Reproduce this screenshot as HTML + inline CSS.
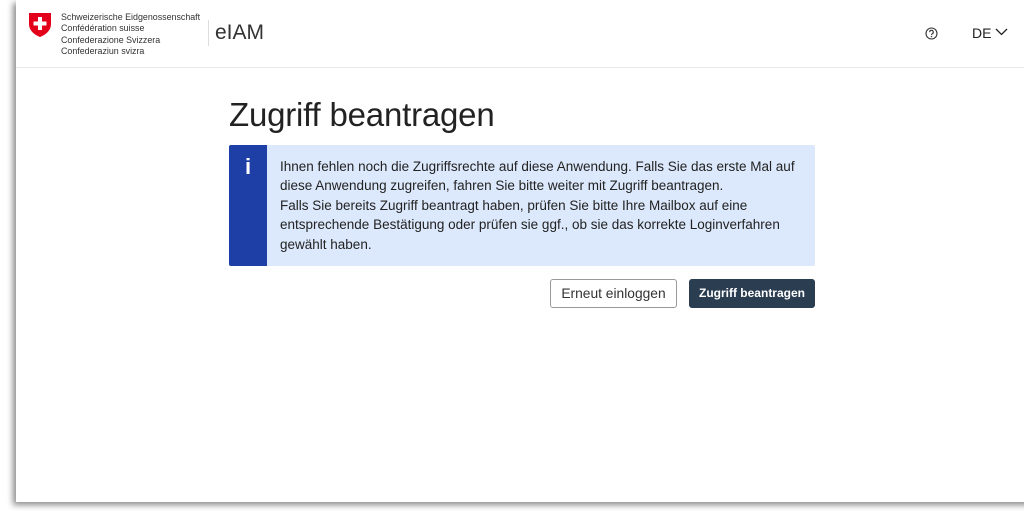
<!DOCTYPE html>
<html><head><meta charset="utf-8"><style>
html,body{margin:0;padding:0;width:1024px;height:511px;background:#fff;overflow:hidden;font-family:"Liberation Sans","DejaVu Sans",sans-serif;}
.win{position:absolute;left:16px;top:0;width:1020px;height:502px;background:#fff;box-shadow:-3px 3px 6px rgba(0,0,0,.45);}
.hdr{position:absolute;left:0;top:0;right:0;height:67px;border-bottom:1px solid #e8e8e8;}
.txt{position:absolute;left:45px;top:12px;font-size:8.9px;line-height:11.3px;color:#333;white-space:nowrap;}
.sep{position:absolute;left:192px;top:20px;width:1px;height:26px;background:#ddd;}
.eiam{position:absolute;left:199px;top:21px;font-size:21px;color:#333;font-weight:300;}
.de{position:absolute;left:956px;top:25px;font-size:14px;color:#222;}
h1{position:absolute;left:213px;top:96px;margin:0;font-size:33px;font-weight:normal;color:#222;letter-spacing:-.2px;}
.box{position:absolute;left:213px;top:145px;width:586px;height:121px;background:#dce9fc;border-radius:2px;overflow:hidden;}
.strip{position:absolute;left:0;top:0;width:38px;height:121px;background:#1d3fa6;color:#fff;font-size:22px;font-weight:bold;text-align:center;line-height:44px;}
.box p{position:absolute;left:51px;top:12px;margin:0;font-size:13.5px;line-height:19.4px;color:#222;white-space:nowrap;}
.b1,.b2{position:absolute;top:279px;height:29px;box-sizing:border-box;border-radius:3px;line-height:27px;text-align:center;}
.b1{left:534px;width:127px;border:1px solid #999;color:#333;background:#fff;font-size:13.8px;}
.b2{left:673px;width:126px;background:#2b3d51;color:#fff;font-weight:bold;border:1px solid #2b3d51;font-size:12px;}
</style></head><body>
<div class="win">
<div class="hdr">
<svg style="position:absolute;left:12px;top:12px" width="24" height="26" viewBox="0 0 24 26"><path d="M1 1h22v11c0 7-6 11-11 13C7 23 1 19 1 12z" fill="#e2001a"/><rect x="10" y="5" width="4" height="13" fill="#fff"/><rect x="5.5" y="9.5" width="13" height="4" fill="#fff"/></svg>
<div class="txt">Schweizerische Eidgenossenschaft<br>Confédération suisse<br>Confederazione Svizzera<br>Confederaziun svizra</div>
<div class="sep"></div>
<div class="eiam">eIAM</div>
<svg style="position:absolute;left:909px;top:27px" width="13" height="13" viewBox="0 0 13 13"><circle cx="6.5" cy="6.5" r="5.5" fill="none" stroke="#333" stroke-width="1.1"/><path d="M4.7 5.2a1.8 1.8 0 1 1 2.6 1.5c-.6.3-.8.6-.8 1.3" fill="none" stroke="#333" stroke-width="1.1"/><circle cx="6.5" cy="9.6" r=".7" fill="#333"/></svg>
<div class="de">DE <svg width="13" height="8" viewBox="0 0 13 8" style="vertical-align:2px"><path d="M1 1l5.5 5.5L12 1" fill="none" stroke="#222" stroke-width="1.3"/></svg></div>
</div>
<h1>Zugriff beantragen</h1>
<div class="box"><div class="strip">i</div><p>Ihnen fehlen noch die Zugriffsrechte auf diese Anwendung. Falls Sie das erste Mal auf<br>diese Anwendung zugreifen, fahren Sie bitte weiter mit Zugriff beantragen.<br>Falls Sie bereits Zugriff beantragt haben, prüfen Sie bitte Ihre Mailbox auf eine<br>entsprechende Bestätigung oder prüfen sie ggf., ob sie das korrekte Loginverfahren<br>gewählt haben.</p></div>
<div class="b1">Erneut einloggen</div>
<div class="b2">Zugriff beantragen</div>
</div>
</body></html>
